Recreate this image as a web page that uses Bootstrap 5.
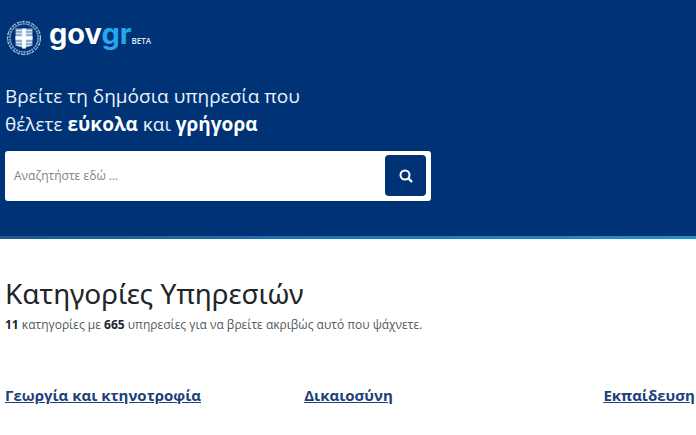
<!DOCTYPE html>
<html lang="el">
<head>
<meta charset="utf-8">
<meta name="viewport" content="width=device-width, initial-scale=1">
<title>govgr</title>
<link rel="stylesheet" href="https://cdn.jsdelivr.net/npm/bootstrap@5.3.0/dist/css/bootstrap.min.css">
<style>
  body { font-family: "Open Sans", "Noto Sans", sans-serif; color: #212529; }
  .gov-gutter { padding-left: 5px; }
  .gov-hero { background: #003375; padding-top: 16px; padding-bottom: 35px; }
  .gov-stripe { height: 3px; background: linear-gradient(90deg, #1b5c8c, #1c78b4 50%, #2390cc); }
  .gov-brand { gap: 6px; height: 44px; }
  .gov-name { font: 700 29px/36px Inter, "Noto Sans", sans-serif; color: #fff; margin-bottom: 8px; }
  .gov-name span { color: #25a6ee; }
  .gov-beta { font-size: 8px; line-height: 12px; font-weight: 600; color: #dce8f6; }
  .gov-lead { font-size: 19px; line-height: 28px; color: #e9f2fd; margin: 22px 0 13px; }
  .gov-lead strong { color: #fff; }
  .gov-search { width: 61.7%; min-width: 300px; padding: 4px 5px 5px 4px; height: 50px; border-radius: 3px; }
  .gov-search input, .gov-search input:focus { font-size: 12px; padding: 0 5px; box-shadow: none; }
  .gov-search input::placeholder { color: #7b8385; opacity: 1; }
  .gov-search button, .gov-search button:hover { width: 41px; background: #003375; color: #fff; border-radius: 4px; }
  .gov-title { font-family: "Noto Sans", sans-serif; font-size: 28px; line-height: 36px; font-weight: 400; margin: 36px 0 4px; }
  .gov-sum { font-size: 12px; line-height: 20px; color: #505a5f; margin-bottom: 48px; }
  .gov-sum strong { color: #212529; }
  .gov-cats { display: grid; grid-template-columns: 43.3% 43.3% 1fr; }
  .gov-cats a { font-size: 15px; line-height: 24px; font-weight: 700; color: #1c4078; }
</style>
<script src="https://cdn.jsdelivr.net/npm/bootstrap@5.3.0/dist/js/bootstrap.bundle.min.js" defer></script>
</head>
<body>
<header>
  <div class="gov-hero gov-gutter">
    <a href="#" class="gov-brand d-flex align-items-center text-decoration-none">
      <svg width="38" height="38" viewBox="0 0 38 38" fill="none" aria-hidden="true">
        <circle cx="19" cy="19" r="15.2" stroke="#9fbcdc" stroke-width="4" stroke-dasharray="1.5 1.3" opacity=".6"/>
        <circle cx="19" cy="19" r="16.5" stroke="#b9cfe8" stroke-width="1" stroke-dasharray="3 2"/>
        <circle cx="19" cy="19" r="14" stroke="#8eafd4" stroke-width="1" stroke-dasharray="3 1"/>
        <path d="M10.500 9.500h17v17c-2 1-5 1-8.500 3-3.500-2-6.500-2-8.500-3z" fill="#8fb0d6"/>
        <path d="M11 11.500h16M11 14.500h16M11 23.500h16M12 26.500h14" stroke="#d5e4f3"/>
        <path d="M19 9.500v20M10.500 19h17" stroke="#fff" stroke-width="3.6"/>
      </svg>
      <span class="d-flex align-items-baseline"><span class="gov-name">gov<span>gr</span></span><span class="gov-beta">BETA</span></span>
    </a>
    <p class="gov-lead">Βρείτε τη δημόσια υπηρεσία που<br>θέλετε <strong>εύκολα</strong> και <strong>γρήγορα</strong></p>
    <form class="gov-search d-flex bg-white" role="search">
      <input class="form-control border-0" type="text" aria-label="Αναζητήστε εδώ" placeholder="Αναζητήστε εδώ ...">
      <button class="btn p-0 border-0 flex-shrink-0 d-flex align-items-center justify-content-center" type="button" aria-label="Αναζήτηση">
        <svg width="14" height="14" viewBox="0 0 14 14" fill="none" stroke="currentColor" stroke-width="2" aria-hidden="true"><circle cx="6" cy="6" r="4.500"/><path d="M9 9l4 4" stroke-width="2.400"/></svg>
      </button>
    </form>
  </div>
  <div class="gov-stripe"></div>
</header>
<main class="gov-gutter">
  <h1 class="gov-title">Κατηγορίες Υπηρεσιών</h1>
  <p class="gov-sum"><strong>11</strong> κατηγορίες με <strong>665</strong> υπηρεσίες για να βρείτε ακριβώς αυτό που ψάχνετε.</p>
  <ul class="gov-cats list-unstyled mb-0">
    <li><a href="#">Γεωργία και κτηνοτροφία</a></li>
    <li><a href="#">Δικαιοσύνη</a></li>
    <li><a href="#">Εκπαίδευση</a></li>
  </ul>
</main>
</body>
</html>
